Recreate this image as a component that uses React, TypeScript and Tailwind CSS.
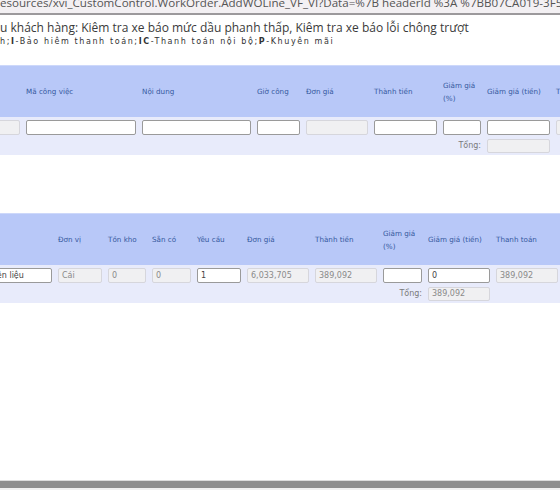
import React from "react";

type Cell = { label?: React.ReactNode; value?: string; kind?: "edit" | "off" | "none" };

const HEAD = "grid grid-cols-[69px_116px_115px_49px_68px_69px_44px_69px_69px] ml-[-43px]";
const HEAD2 = "grid grid-cols-[86px_50px_44px_45px_50px_68px_68px_45px_68px_68px] ml-[-28px]";

function Box({ value, kind = "edit", h = "h-[15px]" }: { value?: string; kind?: "edit" | "off" | "none"; h?: string }) {
  if (kind === "none") return null;
  const look =
    kind === "edit"
      ? "bg-white border-[#9a9a9a] text-[#444]"
      : "bg-[#f0f0f2] border-[#d6d6dc] text-[#8a8a8a]";
  return (
    <div className={`w-full ${h} border rounded-[2px] px-[3px] flex items-center whitespace-nowrap overflow-hidden text-[8px] ${look}`}>
      {value}
    </div>
  );
}

function Section({ grid, cols, total, labelSpan }: { grid: string; cols: Cell[]; total: string; labelSpan: "six" | "seven" }) {
  return (
    <div className="w-[560px] overflow-hidden font-['DejaVu_Sans',sans-serif]">
      {/* header */}
      <div className="h-[52px] bg-[#b8c8f8] border-t border-[#cdd8fa] overflow-hidden">
        <div className={`${grid} h-full items-center`}>
          {cols.map((c, i) => (
            <div key={i} className="pr-[6px] whitespace-nowrap text-[7.2px] leading-[13px] text-[#35589e]">
              {c.label}
            </div>
          ))}
        </div>
      </div>
      {/* body */}
      <div className="bg-[#e8ebfb]">
        <div className={`${grid} h-[20px] pt-[3px]`}>
          {cols.map((c, i) => (
            <div key={i} className="pr-[6px]">
              <Box value={c.value} kind={c.kind} />
            </div>
          ))}
        </div>
        <div className={`${grid} h-[18px] pt-[2px]`}>
          <div className={labelSpan === "six" ? "col-span-6" : "col-span-7"} />
          <div className="pr-[6px] flex justify-end items-center h-[14px] text-[8px] text-[#7a7a7a]">Tổng:</div>
          <div className="pr-[6px]">
            <Box value={total} kind="off" h="h-[14px]" />
          </div>
        </div>
      </div>
    </div>
  );
}

export default function App() {
  const first: Cell[] = [
    { kind: "off" },
    { label: "Mã công việc" },
    { label: "Nội dung" },
    { label: "Giờ công" },
    { label: "Đơn giá", kind: "off" },
    { label: "Thành tiền" },
    { label: <>Giảm giá<br />(%)</> },
    { label: "Giảm giá (tiền)" },
    { label: "Thanh toán", kind: "off" },
  ];

  const second: Cell[] = [
    { value: "Nguyên liệu" },
    { label: "Đơn vị", value: "Cái", kind: "off" },
    { label: "Tồn kho", value: "0", kind: "off" },
    { label: "Sẵn có", value: "0", kind: "off" },
    { label: "Yêu cầu", value: "1" },
    { label: "Đơn giá", value: "6,033,705", kind: "off" },
    { label: "Thành tiền", value: "389,092", kind: "off" },
    { label: <>Giảm giá<br />(%)</> },
    { label: "Giảm giá (tiền)", value: "0" },
    { label: "Thanh toán", value: "389,092", kind: "off" },
  ];

  return (
    <div className="w-[560px] h-[490px] bg-white overflow-hidden flex flex-col font-['Open_Sans',sans-serif]">
      {/* address strip */}
      <div className="h-[15px] bg-[#f3f0f3] border-b-2 border-[#9c999c] overflow-hidden">
        <div className="mt-[-6px] whitespace-nowrap text-[11.6px] leading-[18px] text-[#555]">
          esources/xvi_CustomControl.WorkOrder.AddWOLine_VF_VI?Data=%7B headerId %3A %7BB07CA019-3F59-F0T1-BEC
        </div>
      </div>

      {/* title */}
      <div className="pt-[5px] whitespace-nowrap text-[12px] leading-[16px] text-[#3a3a3a]">
        u khách hàng: Kiêm tra xe báo mức dầu phanh thấp, Kiêm tra xe báo lỗi chông trượt
      </div>
      <div className="whitespace-nowrap font-['DejaVu_Sans',sans-serif] text-[8px] leading-[11px] tracking-[1.6px] text-[#333]">
        h;<b>I</b>-Bảo hiêm thanh toán;<b>IC</b>-Thanh toán nội bộ;<b>P</b>-Khuyên mãi
      </div>

      <div className="mt-[18px]">
        <Section grid={HEAD} cols={first} total="" labelSpan="six" />
      </div>

      <div className="mt-[58px]">
        <Section grid={HEAD2} cols={second} total="389,092" labelSpan="seven" />
      </div>

      <div className="flex-1" />
      <div className="h-[1px] bg-[#dcdcdc]" />
      <div className="h-[7px] bg-[#8e8e8e]" />
      <div className="h-[2px] bg-[#f0f0f0]" />
    </div>
  );
}
